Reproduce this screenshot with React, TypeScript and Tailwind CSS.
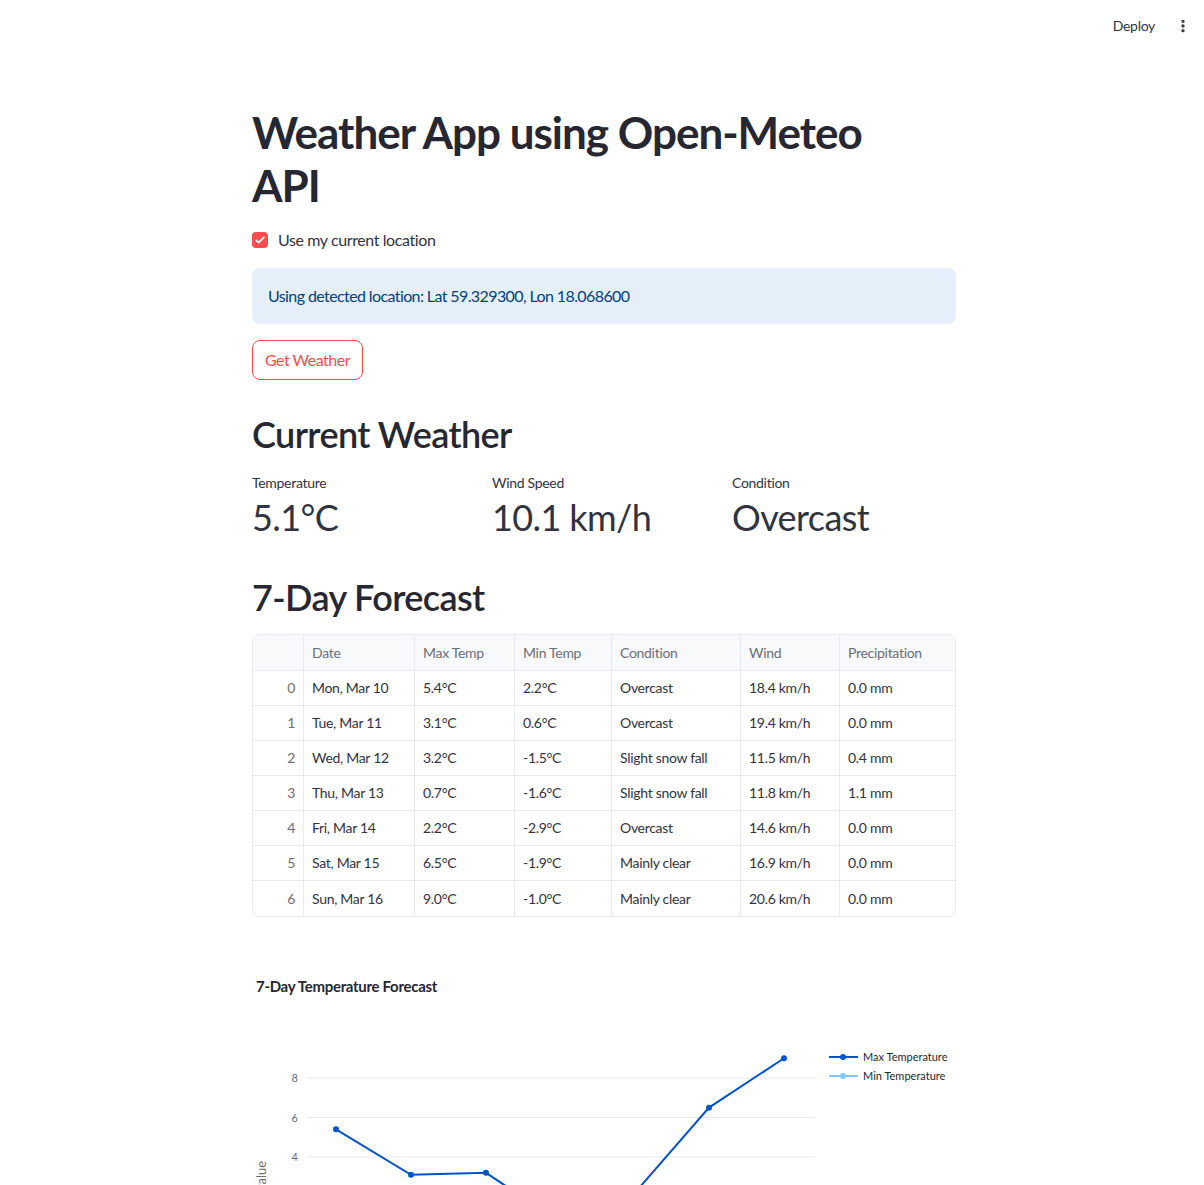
import { EllipsisVertical } from 'lucide-react'

const rows = [
  ['Mon, Mar 10', '5.4°C', '2.2°C', 'Overcast', '18.4 km/h', '0.0 mm'],
  ['Tue, Mar 11', '3.1°C', '0.6°C', 'Overcast', '19.4 km/h', '0.0 mm'],
  ['Wed, Mar 12', '3.2°C', '-1.5°C', 'Slight snow fall', '11.5 km/h', '0.4 mm'],
  ['Thu, Mar 13', '0.7°C', '-1.6°C', 'Slight snow fall', '11.8 km/h', '1.1 mm'],
  ['Fri, Mar 14', '2.2°C', '-2.9°C', 'Overcast', '14.6 km/h', '0.0 mm'],
  ['Sat, Mar 15', '6.5°C', '-1.9°C', 'Mainly clear', '16.9 km/h', '0.0 mm'],
  ['Sun, Mar 16', '9.0°C', '-1.0°C', 'Mainly clear', '20.6 km/h', '0.0 mm'],
]

const maxT = [5.4, 3.1, 3.2, 0.7, 2.2, 6.5, 9.0]
const minT = [2.2, 0.6, -1.5, -1.6, -2.9, -1.9, -1.0]
const xs = [84, 159, 234, 308, 383, 457, 532]
const yv = (v: number) => 145 + (8 - v) * 19.75

function TempChart() {
  const maxPts = maxT.map((v, i) => `${xs[i]},${yv(v)}`).join(' ')
  const minPts = minT.map((v, i) => `${xs[i]},${yv(v)}`).join(' ')
  return (
    <svg width="704" height="450" className="block mt-4" style={{ fontFamily: 'inherit' }}>
      <text x="4" y="59" fontSize="15" fontWeight="700" fill="#262730" letterSpacing="-0.3">7-Day Temperature Forecast</text>
      {[8, 6, 4, 2, 0, -2].map((t) => (
        <g key={t}>
          <line x1="55" x2="563" y1={yv(t)} y2={yv(t)} stroke="#e6e9ef" strokeWidth="1" />
          <text x="46" y={yv(t) + 4} fontSize="11" fill="#6b6e7a" textAnchor="end">{t}</text>
        </g>
      ))}
      <text x="14" y="243" fontSize="13" fill="#6b6e7a" textAnchor="middle" transform="rotate(-90 14 243)">value</text>
      <polyline points={minPts} fill="none" stroke="#83c9ff" strokeWidth="2" />
      {minT.map((v, i) => <circle key={i} cx={xs[i]} cy={yv(v)} r="3" fill="#83c9ff" />)}
      <polyline points={maxPts} fill="none" stroke="#0054c9" strokeWidth="2" />
      {maxT.map((v, i) => <circle key={i} cx={xs[i]} cy={yv(v)} r="3" fill="#0054c9" />)}
      <line x1="577" x2="606" y1="124" y2="124" stroke="#0054c9" strokeWidth="2" />
      <circle cx="591" cy="124" r="3" fill="#0054c9" />
      <text x="611" y="128" fontSize="11" fill="#262730">Max Temperature</text>
      <line x1="577" x2="606" y1="143" y2="143" stroke="#83c9ff" strokeWidth="2" />
      <circle cx="591" cy="143" r="3" fill="#83c9ff" />
      <text x="611" y="147" fontSize="11" fill="#262730">Min Temperature</text>
    </svg>
  )
}

export default function App() {
  const cols = ['w-[51px]', 'w-[111px]', 'w-[100px]', 'w-[97px]', 'w-[129px]', 'w-[99px]', 'flex-1']
  const heads = ['', 'Date', 'Max Temp', 'Min Temp', 'Condition', 'Wind', 'Precipitation']

  return (
    <div className="min-h-screen bg-white text-[#31333f] font-['Source_Sans_Pro','Lato',sans-serif] overflow-hidden">
      {/* header */}
      <header className="h-[52px] flex items-center justify-end pr-[13px]">
        <span className="text-sm text-[#31333f] mr-[20px] tracking-[-0.3px]">Deploy</span>
        <EllipsisVertical className="w-4 h-4 text-[#31333f]" strokeWidth={3} />
      </header>

      <main className="w-[704px] ml-[252px] pb-10">
        <h1 className="mt-[54px] text-[44px] leading-[53px] font-bold tracking-[-1px] text-[#262730]">
          Weather App using Open-Meteo<br />API
        </h1>

        <label className="mt-4 h-6 flex items-center gap-[10px]">
          <span className="w-4 h-4 rounded bg-[#ff4b4b] flex items-center justify-center">
            <svg viewBox="0 0 16 16" className="w-3 h-3"><path d="M3 8.5l3 3 7-7" fill="none" stroke="white" strokeWidth="2.4" strokeLinecap="round" strokeLinejoin="round" /></svg>
          </span>
          <span className="text-base tracking-[-0.4px]">Use my current location</span>
        </label>

        <div className="mt-4 h-14 rounded-lg bg-[#e5eff9] flex items-center px-4 text-base tracking-[-0.6px] text-[#004280]">
          Using detected location: Lat 59.329300, Lon 18.068600
        </div>

        <button className="mt-4 h-10 px-3 rounded-lg border border-[#ff4b4b] text-[#ff4b4b] text-base tracking-[-0.5px] bg-white">
          Get Weather
        </button>

        <h2 className="mt-[32px] text-[36px] leading-[44px] font-semibold tracking-[-0.6px] text-[#262730]">Current Weather</h2>

        <div className="mt-[17px] flex">
          {[['Temperature', '5.1°C'], ['Wind Speed', '10.1 km/h'], ['Condition', 'Overcast']].map(([l, v]) => (
            <div key={l} className="w-[240px] shrink-0">
              <div className="text-sm leading-5 tracking-[-0.3px]">{l}</div>
              <div className="mt-[2px] text-[36px] leading-[44px] tracking-[-0.6px]">{v}</div>
            </div>
          ))}
        </div>

        <h2 className="mt-[36px] text-[36px] leading-[44px] font-semibold tracking-[-0.6px] text-[#262730]">7-Day Forecast</h2>

        <div className="mt-[15px] border border-[#e6e9ef] rounded-lg overflow-hidden text-sm tracking-[-0.3px]">
          <div className="flex h-9 bg-[#f8f9fb] border-b border-[#e6e9ef] text-[#6b6e7a]">
            {heads.map((h, i) => (
              <div key={i} className={`${cols[i]} px-2 flex items-center ${i < 6 ? 'border-r border-[#e6e9ef]' : ''}`}>{h}</div>
            ))}
          </div>
          {rows.map((r, ri) => (
            <div key={ri} className={`flex h-[35px] ${ri < 6 ? 'border-b border-[#e6e9ef]' : ''}`}>
              <div className={`${cols[0]} px-2 flex items-center justify-end text-[#6b6e7a] border-r border-[#e6e9ef]`}>{ri}</div>
              {r.map((c, ci) => (
                <div key={ci} className={`${cols[ci + 1]} px-2 flex items-center ${ci < 5 ? 'border-r border-[#e6e9ef]' : ''}`}>{c}</div>
              ))}
            </div>
          ))}
        </div>

        <TempChart />
      </main>
    </div>
  )
}
